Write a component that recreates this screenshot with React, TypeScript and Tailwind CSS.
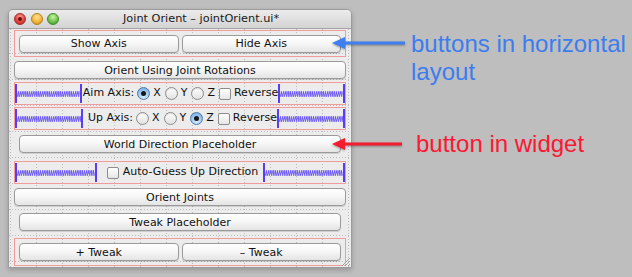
import React from 'react'

const btn =
  'flex items-center justify-center rounded-[4px] border border-[#9a9a9a] bg-[linear-gradient(#ffffff,#f6f6f6_50%,#e4e4e4)] shadow-[0_1px_0_rgba(0,0,0,0.12)] text-[11px] text-[#111] leading-none'

const redBox = 'border border-[#f19b9b]'

function Spacer({ id }: { id: string }) {
  return (
    <div className="flex h-full min-w-0 flex-1 items-stretch">
      <div className="my-[1px] w-[2px] bg-[#5a3cf6]" />
      <div className="min-w-0 flex-1">
        <svg width="100%" height="21">
          <defs>
            <pattern id={id} x="0" y="8" width="2.2" height="6" patternUnits="userSpaceOnUse">
              <path d="M0 6 L1.6 0 L2.2 6" fill="none" stroke="#6a56f4" strokeWidth="0.9" />
            </pattern>
          </defs>
          <rect x="0" y="8" width="100%" height="6" fill={`url(#${id})`} />
        </svg>
      </div>
      <div className="my-[1px] w-[2px] bg-[#5a3cf6]" />
    </div>
  )
}

function Radio({ on }: { on?: boolean }) {
  return on ? (
    <span className="flex h-[13px] w-[13px] shrink-0 items-center justify-center rounded-full border border-[#4d7aae] bg-[radial-gradient(circle_at_50%_75%,#dcefff_0%,#93c0f1_60%,#6ba3e2_100%)]">
      <span className="block h-[5px] w-[5px] rounded-full bg-[#161616]" />
    </span>
  ) : (
    <span className="block h-[13px] w-[13px] shrink-0 rounded-full border border-[#8c8c8c] bg-[linear-gradient(#ffffff,#e1e1e1)] shadow-[inset_0_1px_1px_rgba(0,0,0,0.12)]" />
  )
}

function Check({ className = '' }: { className?: string }) {
  return (
    <span
      className={`block h-[12px] w-[12px] shrink-0 rounded-[2px] border border-[#8c8c8c] bg-[linear-gradient(#ffffff,#e6e6e6)] ${className}`}
    />
  )
}

function AxisRow({ label, sel, id, labelClass }: { label: string; sel: number; id: string; labelClass: string }) {
  return (
    <div className={`flex h-[23px] items-center ${redBox} text-[11px] text-[#111]`}>
      <Spacer id={`${id}-l`} />
      <span className={labelClass}>{label}</span>
      {['X', 'Y', 'Z'].map((a, i) => (
        <React.Fragment key={a}>
          <span className={`flex ${i === 0 ? 'ml-[3px]' : 'ml-[4px]'}`}>
            <Radio on={sel === i} />
          </span>
          <span className="ml-[3px]">{a}</span>
        </React.Fragment>
      ))}
      <Check className="ml-[4px]" />
      <span className="ml-[3px]">Reverse</span>
      <Spacer id={`${id}-r`} />
    </div>
  )
}

export default function App() {
  return (
    <div className="relative flex h-[277px] w-[632px] overflow-hidden bg-[#bebebe] font-['DejaVu_Sans',sans-serif]">
      {/* Window */}
      <div className="relative ml-[8px] mt-[9px] flex h-[259px] w-[344px] shrink-0 flex-col rounded-t-[5px] border border-[#9b9b9b] shadow-[0_2px_5px_rgba(0,0,0,0.22)]">
        <div className="flex h-[19px] shrink-0 items-center rounded-t-[4px] border-b border-[#a3a3a3] bg-[linear-gradient(#ececec,#d3d3d3)]">
          <span className="ml-[5px] flex h-[12px] w-[12px] items-center justify-center rounded-full border border-[#a22b26] bg-[radial-gradient(circle_at_50%_30%,#ff9d95,#e0453f_55%,#b3261f)]">
            <span className="block h-[4px] w-[4px] rounded-full bg-[#6b0f0c]" />
          </span>
          <span className="ml-[5px] block h-[12px] w-[12px] rounded-full border border-[#b1821d] bg-[radial-gradient(circle_at_50%_30%,#ffe28e,#f3b63c_55%,#c38a1b)]" />
          <span className="ml-[4px] block h-[12px] w-[12px] rounded-full border border-[#3f8a2a] bg-[radial-gradient(circle_at_50%_30%,#cbf3a6,#72c34e_55%,#3e8e26)]" />
          <span className="ml-[64px] text-[11.3px] leading-none text-[#1a1a1a]">Joint Orient – jointOrient.ui*</span>
        </div>

        <div className="flex flex-1 flex-col bg-[#ececec] px-[5px] pt-[1px] [background-image:conic-gradient(from_270deg_at_1px_1px,#bcbcbc_25%,transparent_0),conic-gradient(from_270deg_at_1px_1px,#bcbcbc_25%,transparent_0)] [background-size:3px_26px,26px_3px] [background-position:0_24px,1px_0]">
          <div className={`flex h-[27px] items-center gap-[3px] px-[4px] ${redBox}`}>
            <div className={`h-[18px] flex-1 ${btn}`}>Show Axis</div>
            <div className={`h-[18px] flex-1 ${btn}`}>Hide Axis</div>
          </div>

          <div className={`mt-[4px] h-[18px] ${btn}`}>Orient Using Joint Rotations</div>

          <div className="mt-[3px]">
            <AxisRow id="aim" label="Aim Axis:" sel={0} labelClass="ml-[1px]" />
          </div>
          <div className="mt-[2px]">
            <AxisRow id="up" label="Up Axis:" sel={2} labelClass="ml-[5px]" />
          </div>

          <div className={`mx-[5px] mt-[5px] h-[18px] ${btn}`}>World Direction Placeholder</div>

          <div className={`mt-[8px] flex h-[23px] items-center text-[11px] text-[#111] ${redBox}`}>
            <Spacer id="auto-l" />
            <Check className="ml-[10px]" />
            <span className="ml-[4px] mr-[5px]">Auto-Guess Up Direction</span>
            <Spacer id="auto-r" />
          </div>

          <div className={`mt-[4px] h-[18px] ${btn}`}>Orient Joints</div>

          <div className={`mx-[5px] mt-[7px] h-[18px] ${btn}`}>Tweak Placeholder</div>

          <div className={`mt-[7px] flex h-[28px] items-center gap-[3px] px-[4px] ${redBox}`}>
            <div className={`h-[18px] flex-1 ${btn}`}>+ Tweak</div>
            <div className={`h-[18px] flex-1 ${btn}`}>– Tweak</div>
          </div>
        </div>

        {/* resize grip */}
        <svg className="absolute bottom-0 right-0" width="11" height="11" viewBox="0 0 11 11">
          <path d="M10 2 L2 10 M10 5 L5 10 M10 8 L8 10" stroke="#9a9a9a" strokeWidth="1" />
          <path d="M10 3 L3 10 M10 6 L6 10" stroke="#ffffff" strokeWidth="0.8" />
        </svg>
      </div>

      {/* Annotations */}
      <div className="flex flex-col font-['Liberation_Sans',Arial,sans-serif] text-[24px] leading-[28px]">
        <div className="ml-[59px] mt-[30px] text-[#3b7df0]">
          <div>buttons in horizontal</div>
          <div>layout</div>
        </div>
        <div className="ml-[64px] mt-[44px] text-[#fb1832]">button in widget</div>
      </div>

      <svg className="absolute left-[330px] top-[35px] drop-shadow-[0_1px_1px_rgba(0,0,0,0.35)]" width="80" height="16" viewBox="0 0 80 16">
        <line x1="13" y1="8" x2="75" y2="8" stroke="#3f7ff0" strokeWidth="3" />
        <polygon points="2,8 15,2 15,14" fill="#3f7ff0" />
      </svg>
      <svg className="absolute left-[330px] top-[136px] drop-shadow-[0_1px_1px_rgba(0,0,0,0.35)]" width="76" height="16" viewBox="0 0 76 16">
        <line x1="13" y1="8" x2="72" y2="8" stroke="#f51c2e" strokeWidth="3" />
        <polygon points="2,8 15,2 15,14" fill="#f51c2e" />
      </svg>
    </div>
  )
}
